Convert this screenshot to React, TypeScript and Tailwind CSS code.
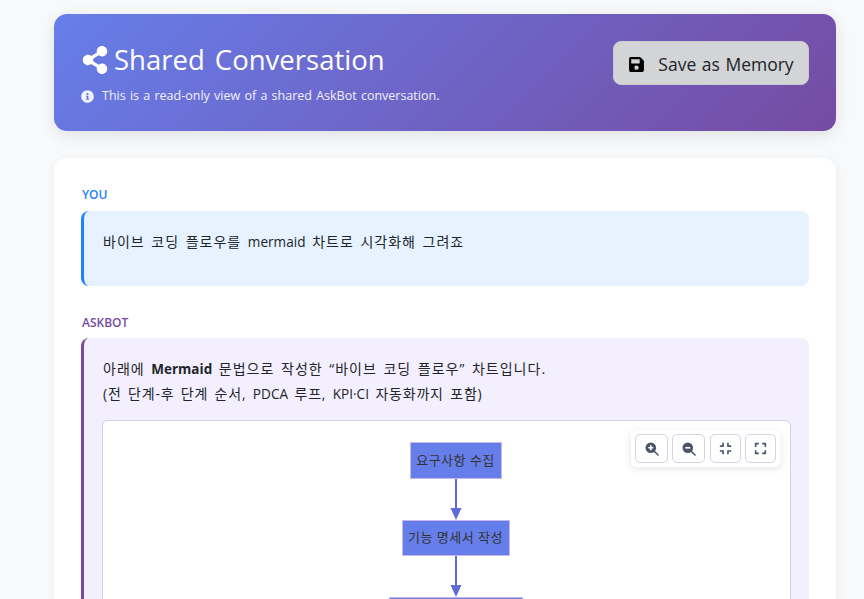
import type { ReactNode } from "react";
import { FaCompress, FaExpand, FaInfoCircle, FaSave, FaShareAlt } from "react-icons/fa";

const FONT = "font-['Open_Sans','Noto_Sans_CJK_KR',sans-serif]";

// Korean runs wider than latin in the original font, so latin words get their own span
function Latin({ children }: { children: ReactNode }) {
  return <span className="text-[13.6px] leading-none tracking-normal">{children}</span>;
}

function ZoomIcon({ minus }: { minus?: boolean }) {
  return (
    <svg width="14" height="14" viewBox="0 0 14 14" aria-hidden="true">
      <line x1="8.5" y1="8.5" x2="13" y2="13" stroke="#4a5568" strokeWidth="1.6" strokeLinecap="round" />
      <circle cx="5.8" cy="5.8" r="5.3" fill="#4a5568" />
      <path d={minus ? "M3.3 5.8H8.3" : "M3.3 5.8H8.3M5.8 3.3V8.3"} stroke="#fff" strokeWidth="1.6" />
    </svg>
  );
}

const ZOOM_TOOLS = [
  { key: "in", width: "w-[33px]", icon: <ZoomIcon /> },
  { key: "out", width: "w-[33px] mr-[1px]", icon: <ZoomIcon minus /> },
  { key: "reset", width: "w-[31px]", icon: <FaCompress className="w-[13px] h-[13px]" /> },
  { key: "full", width: "w-[31px]", icon: <FaExpand className="w-[13px] h-[13px]" /> },
];

function Arrow() {
  return (
    <svg width="12" height="41" viewBox="0 0 12 41" className="block shrink-0" aria-hidden="true">
      <line x1="6" y1="0" x2="6" y2="30" stroke="#5f6bd8" strokeWidth="2" />
      <path d="M0.5 29 L11.5 29 L6 41 Z" fill="#5f6bd8" />
    </svg>
  );
}

function FlowNode({ label, width }: { label?: string; width: string }) {
  return (
    <div className={`${width} h-[36.5px] shrink-0 flex items-center justify-center bg-[#667eea] border border-[#c9b6ee] text-[13px] tracking-[0.5px] text-[#333]`}>
      {label}
    </div>
  );
}

export default function App() {
  return (
    <div className={`${FONT} h-[599px] overflow-hidden bg-[#f8f9fa] pl-[54px] pt-[14px]`}>
      <div className="w-[782px]">
        <header className="h-[117px] rounded-[13px] bg-[linear-gradient(135deg,#667eea_0%,#764ba2_100%)] shadow-[0_4px_16px_rgba(0,0,0,0.1)] px-[27px] flex items-center justify-between">
          <div className="text-white mt-[2px]">
            <h1 className="flex items-center text-[27.5px] leading-[36px] font-normal [word-spacing:3px]">
              <FaShareAlt className="w-[28px] h-[28px] mr-[5px]" />
              Shared Conversation
            </h1>
            <p className="flex items-center mt-[9px] text-[12.5px] leading-[18px] text-white/90 [word-spacing:1px]">
              <FaInfoCircle className="w-[13px] h-[13px] mr-[8px]" />
              This is a read-only view of a shared AskBot conversation.
            </p>
          </div>
          <button type="button" className="mb-[19px] w-[196px] h-[44px] pt-[2px] rounded-[8px] bg-[#d3d4d6] border border-[#c9c9d0] flex items-center justify-center text-[17.5px] text-[#212529] [word-spacing:1px]">
            <FaSave className="w-[17px] h-[17px] mr-[13px] text-black" />
            Save as Memory
          </button>
        </header>

        <main className="mt-[27px] rounded-[13px] bg-white shadow-[0_2px_10px_rgba(0,0,0,0.06)] px-[27px] pt-[28px] pb-[40px]">
          <div className="pl-[1px] text-[12px] leading-[18px] font-semibold text-[#1a82ff]">YOU</div>
          <div className="mt-[7px] h-[75px] rounded-[8px] border-l-[3px] border-[#1a82ff] bg-[#e6f2ff] pl-[19px] pt-[18px] text-[14px] leading-[25px] tracking-[1px] [word-spacing:2px] text-[#212529]">
            바이브 코딩 플로우를 <Latin>mermaid</Latin> 차트로 시각화해 그려죠
          </div>

          <div className="mt-[28px] pl-[1px] text-[12px] leading-[18px] font-semibold text-[#764ba2]">ASKBOT</div>
          <div className="mt-[6px] rounded-[8px] border-l-[3px] border-[#764ba2] bg-[#f4effe] px-[18px] pt-[18px] pb-[20px] text-[14px] leading-[25px] tracking-[1px] [word-spacing:2px] text-[#212529]">
            <p className="pl-[1px]">
              아래에 <strong className="font-bold text-[13.5px] leading-none tracking-normal">Mermaid</strong> 문법으로 작성한 “바이브 코딩 플로우” 차트입니다.
            </p>
            <p className="pl-[1px] tracking-[0.8px]">
              (전 단계-후 단계 순서, <Latin>PDCA</Latin> 루프, <Latin>KPI·CI</Latin> 자동화까지 포함)
            </p>

            <div className="relative mt-[14px] h-[400px] rounded-[6px] border border-[#cfd4e4] bg-white pt-[21px] tracking-normal [word-spacing:0] flex flex-col items-center">
              <div className="absolute top-[9px] right-[10px] flex gap-[4px] rounded-[6px] bg-white p-[4px] shadow-[0_2px_8px_rgba(0,0,0,0.1)]">
                {ZOOM_TOOLS.map((tool) => (
                  <button key={tool.key} type="button" className={`${tool.width} h-[29px] rounded-[5px] border border-[#d0d5e0] bg-white flex items-center justify-center text-[#4a5568]`}>
                    {tool.icon}
                  </button>
                ))}
              </div>
              <div className="ml-[18px] flex flex-col items-center">
                <FlowNode label="요구사항 수집" width="w-[92px]" />
                <Arrow />
                <FlowNode label="기능 명세서 작성" width="w-[108px]" />
                <Arrow />
                <FlowNode width="w-[134px]" />
              </div>
            </div>
          </div>
        </main>
      </div>
    </div>
  );
}
